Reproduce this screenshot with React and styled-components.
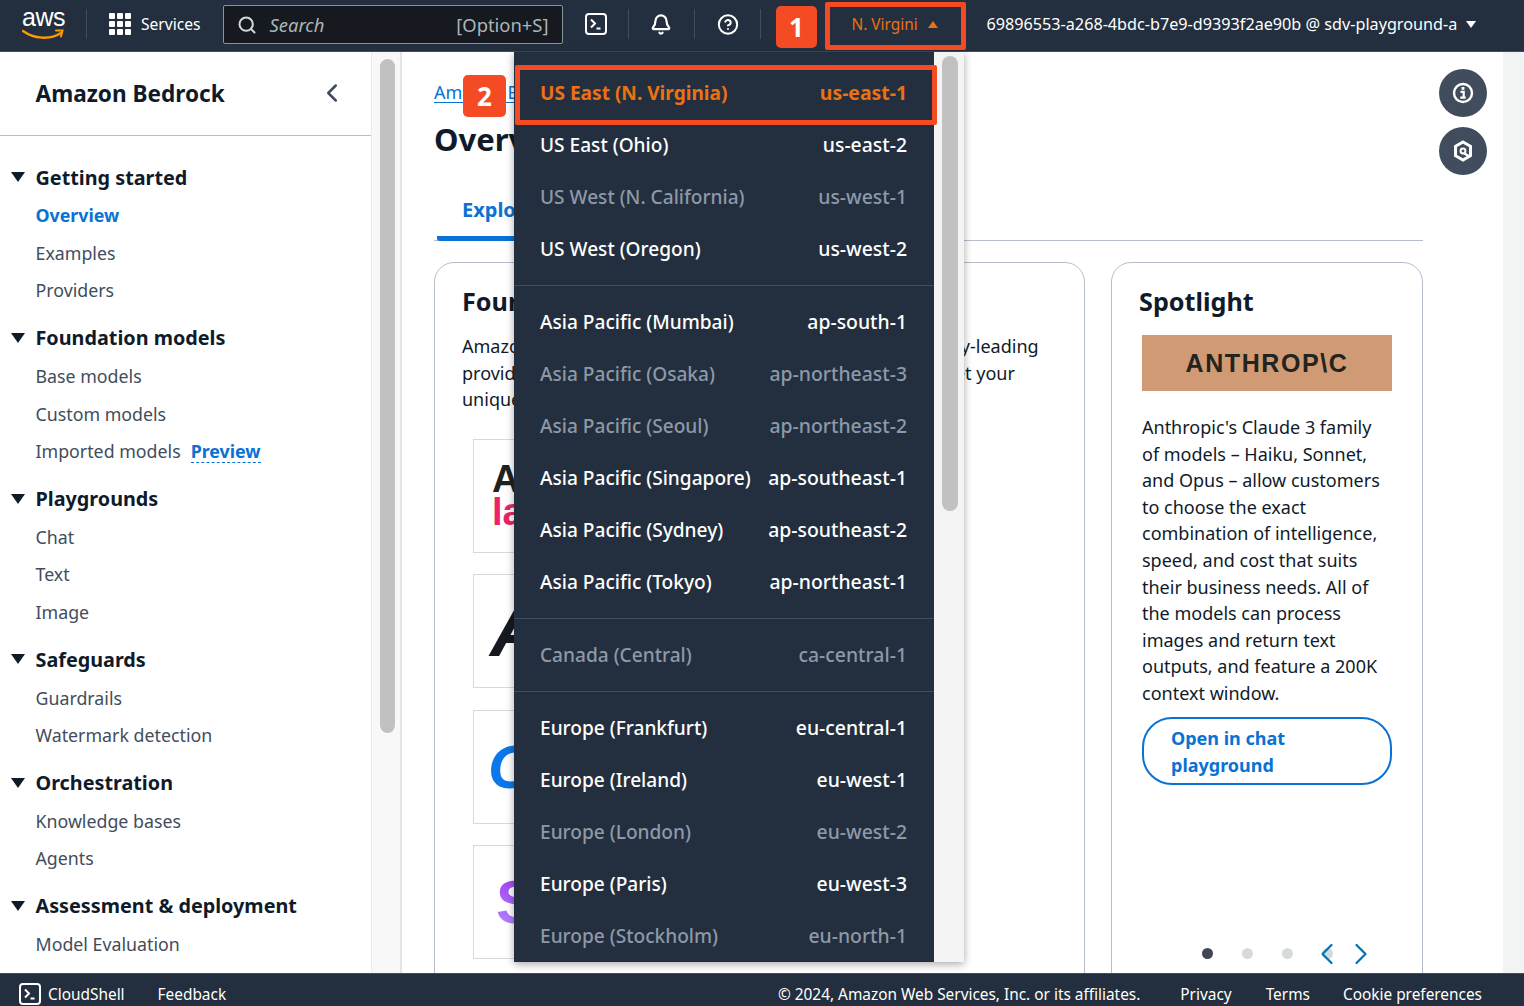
import React from 'react'
import styled, { createGlobalStyle } from 'styled-components'
import { Search, Bell, CircleHelp, ChevronLeft, ChevronRight } from 'lucide-react'

const GlobalStyle = createGlobalStyle`
    html, body {
        margin: 0;
        padding: 0;
        background: #ffffff;
    }
    * {
        box-sizing: border-box;
    }
`

const Page = styled.div`
    position: relative;
    width: 1524px;
    height: 1006px;
    overflow: hidden;
    display: flex;
    flex-direction: column;
    font-family: "Noto Sans", "Open Sans", sans-serif;
    color: #0f1b2a;
`

/* --- top bar --- */
const TopBar = styled.header`
    height: 52px;
    flex: none;
    display: flex;
    align-items: center;
    background: #232f3e;
    border-bottom: 1px solid #414d5c;
    color: #ffffff;
    padding: 0 0 3px 22px;
`

const AwsLogo = styled.div`
    width: 42px;
    height: 38px;
    position: relative;
    flex: none;
    font-family: "Liberation Sans", sans-serif;
    font-size: 25px;
    line-height: 24px;
    letter-spacing: -0.5px;
    svg {
        position: absolute;
        left: 0;
        top: 24px;
    }
`

const Divider = styled.span`
    width: 1px;
    height: 30px;
    flex: none;
    background: #414d5c;
    margin: 0 ${(props) => props.$gap || 22}px;
`

const ServicesGrid = styled.div`
    display: grid;
    grid-template-columns: repeat(3, 6px);
    grid-auto-rows: 6px;
    gap: 2px;
    margin-right: 10px;
    span {
        background: #ffffff;
        border-radius: 1px;
    }
`

const BarText = styled.span`
    font-size: 15.6px;
    white-space: nowrap;
`

const SearchBox = styled.div`
    width: 340px;
    height: 39px;
    margin: 1px 22px 0 22px;
    flex: none;
    display: flex;
    align-items: center;
    padding: 0 13px;
    background: #16191f;
    border: 1px solid #879596;
    border-radius: 2px;
    color: #d5dbdb;
    font-size: 18.4px;
`

const SearchHint = styled.span`
    flex: 1;
    margin-left: 13px;
    font-style: italic;
    color: #aab7b8;
`

const ShortcutHint = styled.span`
    color: #aab7b8;
`

const IconSlot = styled.div`
    width: 22px;
    height: 22px;
    flex: none;
    display: flex;
    align-items: center;
    justify-content: center;
`

const RegionLabel = styled.div`
    margin-left: 70px;
    display: flex;
    align-items: center;
    gap: 10px;
    width: 135px;
    flex: none;
    color: #ec7211;
    font-size: 15.4px;
`

const AccountLabel = styled.div`
    display: flex;
    align-items: center;
    gap: 9px;
    font-size: 16.2px;
    white-space: nowrap;
`

const Caret = styled.span`
    width: 0;
    height: 0;
    flex: none;
    border-left: ${(props) => props.$half || 5.5}px solid transparent;
    border-right: ${(props) => props.$half || 5.5}px solid transparent;
    ${(props) =>
        props.$up
            ? `border-bottom: ${(props.$half || 5.5) * 1.45}px solid ${props.$color};`
            : `border-top: ${(props.$half || 5.5) * 1.45}px solid ${props.$color};`}
`

/* --- body --- */
const Body = styled.div`
    flex: 1;
    min-height: 0;
    display: flex;
`

const Sidebar = styled.aside`
    width: 372px;
    flex: none;
    border-right: 1px solid #e9ebed;
    overflow: hidden;
`

const SideHeader = styled.div`
    height: 84px;
    display: flex;
    align-items: center;
    justify-content: space-between;
    padding: 0 24px 1px 35.5px;
    border-bottom: 1px solid #b6bec9;
    font-size: 22.6px;
    font-weight: 700;
    color: #0f1b2a;
    svg {
        color: #414d5c;
    }
`

const SideNav = styled.nav`
    padding-top: 23px;
`

const NavSection = styled.div`
    margin-bottom: 10.3px;
`

const NavHeading = styled.div`
    height: 38px;
    display: flex;
    align-items: center;
    gap: 10.5px;
    padding: 0 0 2px 11px;
    font-size: 19.8px;
    font-weight: 700;
    white-space: nowrap;
`

const NavItem = styled.div`
    height: 37.5px;
    display: flex;
    align-items: center;
    gap: 10px;
    padding: 0 0 1px 35.5px;
    font-size: 17.8px;
    white-space: nowrap;
    color: ${(props) => (props.$active ? '#0972d3' : '#414d5c')};
    font-weight: ${(props) => (props.$active ? 700 : 400)};
`

const PreviewTag = styled.span`
    color: #0972d3;
    font-weight: 700;
    border-bottom: 1px dashed #0972d3;
    line-height: 22px;
`

const Gutter = styled.div`
    width: 30px;
    flex: none;
    padding: 7px 7px 0 8px;
    background: #f8f8f8;
    border-right: 2px solid #e3e5e6;
`

const GutterThumb = styled.div`
    width: 15px;
    height: ${(props) => props.$height}px;
    background: #c1c1c1;
    border-radius: 8px;
`

const Main = styled.main`
    flex: 1;
    min-width: 0;
    overflow: hidden;
    padding: 28px 0 0 32px;
    display: flex;
`

const Content = styled.div`
    width: 989px;
    flex: none;
`

const Breadcrumb = styled.div`
    height: 26px;
    font-size: 18px;
    line-height: 25px;
    color: #0972d3;
    text-decoration: underline;
    text-underline-offset: 3px;
    white-space: nowrap;
`

const PageTitle = styled.h1`
    margin: 13px 0 0;
    font-size: 31px;
    line-height: 40px;
    font-weight: 700;
`

const TabRow = styled.div`
    margin-top: 20px;
    height: 62px;
    border-bottom: 1px solid #b6bec9;
`

const ActiveTab = styled.div`
    width: 200px;
    height: 62px;
    margin-left: 3px;
    padding: 18px 0 0 25px;
    border-bottom: 5px solid #0972d3;
    border-radius: 0 0 0 3px;
    color: #0972d3;
    font-size: 20px;
    line-height: 26px;
    font-weight: 700;
`

const CardRow = styled.div`
    margin-top: 21px;
    display: flex;
    gap: 26px;
`

const Card = styled.section`
    width: ${(props) => props.$width}px;
    height: 760px;
    flex: none;
    border: 1px solid #b6bec9;
    border-radius: 20px;
    padding: 19px 27px 0;
`

const CardTitle = styled.h2`
    margin: 0;
    font-size: 25.2px;
    line-height: 38px;
    font-weight: 700;
`

const CardIntro = styled.p`
    margin: 13px 0 0;
    font-size: 18px;
    line-height: 26.6px;
`

const LogoList = styled.div`
    margin: 26px 0 0 11px;
    display: flex;
    flex-direction: column;
    gap: 21.4px;
`

const LogoCell = styled.div`
    width: 180px;
    height: 114px;
    border: 1px solid #d5dbdb;
    padding-left: ${(props) => props.$pad}px;
    display: flex;
    flex-direction: column;
    justify-content: center;
    font-family: "Liberation Sans", sans-serif;
    font-weight: 700;
    font-style: ${(props) => (props.$italic ? 'italic' : 'normal')};
    font-size: ${(props) => props.$size}px;
    line-height: ${(props) => props.$lineHeight || 1};
    color: ${(props) => props.$color};
`

const LogoSub = styled.span`
    color: #ec2467;
`

const LogoGradient = styled.span`
    background: linear-gradient(180deg, #a23cf5 0%, #b58cff 100%);
    -webkit-background-clip: text;
    background-clip: text;
    color: transparent;
`

const SpotlightBody = styled.div`
    margin-left: 3px;
    width: 250px;
`

const AnthropicBanner = styled.div`
    margin-top: 15px;
    height: 56px;
    background: #cf9a74;
    display: flex;
    align-items: center;
    justify-content: center;
    font-family: "Liberation Sans", sans-serif;
    font-weight: 700;
    font-size: 25px;
    letter-spacing: 1.6px;
    color: #232320;
`

const SpotlightText = styled.p`
    margin: 23px 0 0;
    font-size: 18px;
    line-height: 26.6px;
`

const ChatButton = styled.div`
    margin-top: 10px;
    height: 68px;
    width: 250px;
    border: 2px solid #0972d3;
    border-radius: 30px;
    padding: 6px 80px 0 27px;
    color: #0972d3;
    font-size: 18px;
    line-height: 27px;
    font-weight: 700;
`

const Pager = styled.div`
    margin: 157px 0 0 60px;
    display: flex;
    align-items: center;
    gap: 29px;
    height: 24px;
`

const Dot = styled.span`
    width: 11px;
    height: 11px;
    flex: none;
    border-radius: 50%;
    background: ${(props) => (props.$on ? '#414750' : '#d5dbdb')};
`

const PagerArrows = styled.div`
    margin-left: -53.5px;
    display: flex;
    color: #0073bb;
    svg + svg {
        margin-left: -2px;
    }
`

const Rail = styled.div`
    width: 80px;
    flex: none;
    margin-top: -11px;
    padding-left: 16px;
    display: flex;
    flex-direction: column;
    gap: 10px;
`

const RailButton = styled.div`
    width: 48px;
    height: 48px;
    border-radius: 50%;
    background: #414d5c;
    color: #ffffff;
    display: flex;
    align-items: center;
    justify-content: center;
`

const Strip = styled.div`
    width: 21px;
    flex: none;
    margin-top: -28px;
    background: #f2f3f3;
`

/* --- footer --- */
const Footer = styled.footer`
    height: 33px;
    flex: none;
    display: flex;
    align-items: center;
    background: #232f3e;
    border-top: 1px solid #414d5c;
    color: #ffffff;
    padding: 8px 42px 0 19px;
    font-size: 15.4px;
`

const FooterLink = styled.span`
    margin-left: ${(props) => props.$gap || 0}px;
    white-space: nowrap;
`

const FooterSpacer = styled.span`
    flex: 1;
`

/* --- region menu --- */
const RegionMenu = styled.div`
    position: absolute;
    left: 514px;
    top: 52px;
    width: 450px;
    height: 910px;
    display: flex;
    box-shadow: 0 2px 8px rgba(0, 0, 0, 0.35);
    overflow: hidden;
`

const RegionList = styled.div`
    width: 420px;
    flex: none;
    background: #232f3e;
    padding-top: 5px;
`

const RegionGroup = styled.div`
    padding: 10px 0;
    border-bottom: ${(props) => (props.$last ? 'none' : '1px solid #414d5c')};
`

const RegionRow = styled.div`
    height: 52px;
    display: flex;
    align-items: center;
    justify-content: space-between;
    padding: 0 27px 0 26px;
    font-size: 19.1px;
    white-space: nowrap;
    font-weight: ${(props) => (props.$selected ? 700 : 500)};
    color: ${(props) =>
        props.$selected ? '#ec7211' : props.$disabled ? '#8d99a8' : '#ffffff'};
`

const RegionCode = styled.span`
    font-size: 19.4px;
    margin-bottom: 2px;
`

const MenuGutter = styled.div`
    flex: 1;
    padding: 4px 6px 0 8px;
    background: #f4f4f4;
`

const MenuThumb = styled.div`
    height: 455px;
    background: #c1c1c1;
    border-radius: 8px;
`

/* --- annotations --- */
const Badge = styled.div`
    position: absolute;
    left: ${(props) => props.$x}px;
    top: ${(props) => props.$y}px;
    width: ${(props) => props.$w}px;
    height: 42px;
    border-radius: 5px;
    background: #f54b24;
    color: #ffffff;
    font-size: 26px;
    font-weight: 700;
    display: flex;
    align-items: center;
    justify-content: center;
`

const Marker = styled.div`
    position: absolute;
    left: ${(props) => props.$x}px;
    top: ${(props) => props.$y}px;
    width: ${(props) => props.$w}px;
    height: ${(props) => props.$h}px;
    border: 5px solid #f54b24;
    border-radius: 2px;
`

const ShellIcon = ({ size = 22 }) => (
    <svg width={size} height={size} viewBox="0 0 22 22" fill="none" stroke="#fff" strokeWidth="2">
        <rect x="1" y="1" width="20" height="20" rx="3" />
        <path d="M6 6.5l4 4-4 4M11.5 15.5h4" />
    </svg>
)

const InfoIcon = () => (
    <svg width="22" height="22" viewBox="0 0 22 22" fill="none" stroke="#fff">
        <circle cx="11" cy="11" r="9" strokeWidth="2.4" />
        <rect x="9.6" y="5" width="2.8" height="2.8" fill="#fff" stroke="none" />
        <path d="M8.5 9.8h3.2v5.2M8.3 15.6h5.4" strokeWidth="2.2" />
    </svg>
)

const HexIcon = () => (
    <svg width="20" height="22" viewBox="0 0 20 22" fill="none" stroke="#fff" strokeWidth="3">
        <path d="M10 2l7.5 4.3v9.4L10 20l-7.5-4.3V6.3z" />
        <circle cx="10" cy="11" r="2.4" strokeWidth="2" />
        <path d="M11 13l5 3.5" strokeWidth="2.4" />
    </svg>
)

const navData = [
    { title: 'Getting started', items: ['Overview', 'Examples', 'Providers'] },
    { title: 'Foundation models', items: ['Base models', 'Custom models', 'Imported models'] },
    { title: 'Playgrounds', items: ['Chat', 'Text', 'Image'] },
    { title: 'Safeguards', items: ['Guardrails', 'Watermark detection'] },
    { title: 'Orchestration', items: ['Knowledge bases', 'Agents'] },
    { title: 'Assessment & deployment', items: ['Model Evaluation'] },
]

const regionGroups = [
    [
        ['US East (N. Virginia)', 'us-east-1', 'selected'],
        ['US East (Ohio)', 'us-east-2'],
        ['US West (N. California)', 'us-west-1', 'disabled'],
        ['US West (Oregon)', 'us-west-2'],
    ],
    [
        ['Asia Pacific (Mumbai)', 'ap-south-1'],
        ['Asia Pacific (Osaka)', 'ap-northeast-3', 'disabled'],
        ['Asia Pacific (Seoul)', 'ap-northeast-2', 'disabled'],
        ['Asia Pacific (Singapore)', 'ap-southeast-1'],
        ['Asia Pacific (Sydney)', 'ap-southeast-2'],
        ['Asia Pacific (Tokyo)', 'ap-northeast-1'],
    ],
    [['Canada (Central)', 'ca-central-1', 'disabled']],
    [
        ['Europe (Frankfurt)', 'eu-central-1'],
        ['Europe (Ireland)', 'eu-west-1'],
        ['Europe (London)', 'eu-west-2', 'disabled'],
        ['Europe (Paris)', 'eu-west-3'],
        ['Europe (Stockholm)', 'eu-north-1', 'disabled'],
    ],
]

export default function App() {
    return (
        <Page>
            <GlobalStyle />
            <TopBar>
                <AwsLogo>
                    aws
                    <svg width="42" height="14" viewBox="0 0 42 14" fill="none">
                        <path d="M1 2c11 8 27 9 38 2" stroke="#ff9900" strokeWidth="2.4" strokeLinecap="round" />
                        <path d="M34 1.5l6.5 0-1.5 6" stroke="#ff9900" strokeWidth="2" strokeLinecap="round" />
                    </svg>
                </AwsLogo>
                <Divider />
                <ServicesGrid>
                    {Array.from({ length: 9 }).map((_, i) => (
                        <span key={i} />
                    ))}
                </ServicesGrid>
                <BarText>Services</BarText>
                <SearchBox>
                    <Search size={20} strokeWidth={2.4} />
                    <SearchHint>Search</SearchHint>
                    <ShortcutHint>[Option+S]</ShortcutHint>
                </SearchBox>
                <IconSlot>
                    <ShellIcon />
                </IconSlot>
                <Divider $gap={21} />
                <IconSlot>
                    <Bell size={23} strokeWidth={2.4} />
                </IconSlot>
                <Divider $gap={22} />
                <IconSlot>
                    <CircleHelp size={23} strokeWidth={2.2} />
                </IconSlot>
                <Divider $gap={21} />
                <RegionLabel>
                    N. Virgini
                    <Caret $up $color="#ec7211" />
                </RegionLabel>
                <AccountLabel>
                    69896553-a268-4bdc-b7e9-d9393f2ae90b @ sdv-playground-a
                    <Caret $color="#ffffff" />
                </AccountLabel>
            </TopBar>

            <Body>
                <Sidebar>
                    <SideHeader>
                        Amazon Bedrock
                        <ChevronLeft size={30} strokeWidth={2} />
                    </SideHeader>
                    <SideNav>
                        {navData.map((section) => (
                            <NavSection key={section.title}>
                                <NavHeading>
                                    <Caret $half={7} $color="#0f1b2a" />
                                    {section.title}
                                </NavHeading>
                                {section.items.map((item) => (
                                    <NavItem key={item} $active={item === 'Overview'}>
                                        {item}
                                        {item === 'Imported models' && <PreviewTag>Preview</PreviewTag>}
                                    </NavItem>
                                ))}
                            </NavSection>
                        ))}
                    </SideNav>
                </Sidebar>
                <Gutter>
                    <GutterThumb $height={674} />
                </Gutter>
                <Main>
                    <Content>
                        <Breadcrumb>Amazon Bedrock</Breadcrumb>
                        <PageTitle>Overview</PageTitle>
                        <TabRow>
                            <ActiveTab>Explore</ActiveTab>
                        </TabRow>
                        <CardRow>
                            <Card $width={651}>
                                <CardTitle>Foundation models</CardTitle>
                                <CardIntro>
                                    Amazon Bedrock supports foundation models from industry-leading
                                    providers. Choose the right model which works best to meet your
                                    unique needs.
                                </CardIntro>
                                <LogoList>
                                    <LogoCell $color="#1f2024" $pad={18} $size={38} $lineHeight={0.85}>
                                        AI21
                                        <LogoSub>labs</LogoSub>
                                    </LogoCell>
                                    <LogoCell $color="#16191f" $italic $pad={16} $size={74}>Amazon</LogoCell>
                                    <LogoCell $color="#0a78ea" $italic $pad={14} $size={62}>Cohere</LogoCell>
                                    <LogoCell $pad={22} $size={62}>
                                        <LogoGradient>Stability</LogoGradient>
                                    </LogoCell>
                                </LogoList>
                            </Card>
                            <Card $width={312}>
                                <CardTitle>Spotlight</CardTitle>
                                <SpotlightBody>
                                    <AnthropicBanner>ANTHROP\C</AnthropicBanner>
                                    <SpotlightText>
                                        Anthropic's Claude 3 family of models – Haiku, Sonnet, and Opus – allow
                                        customers to choose the exact combination of intelligence, speed, and
                                        cost that suits their business needs. All of the models can process
                                        images and return text outputs, and feature a 200K context window.
                                    </SpotlightText>
                                    <ChatButton>Open in chat playground</ChatButton>
                                    <Pager>
                                        <Dot $on />
                                        <Dot />
                                        <Dot />
                                        <Dot />
                                        <PagerArrows>
                                            <ChevronLeft size={36} strokeWidth={1.5} />
                                            <ChevronRight size={36} strokeWidth={1.5} />
                                        </PagerArrows>
                                    </Pager>
                                </SpotlightBody>
                            </Card>
                        </CardRow>
                    </Content>
                    <Rail>
                        <RailButton>
                            <InfoIcon />
                        </RailButton>
                        <RailButton>
                            <HexIcon />
                        </RailButton>
                    </Rail>
                    <Strip />
                </Main>
            </Body>

            <Footer>
                <ShellIcon />
                <FooterLink $gap={7}>CloudShell</FooterLink>
                <FooterLink $gap={33}>Feedback</FooterLink>
                <FooterSpacer />
                <FooterLink>© 2024, Amazon Web Services, Inc. or its affiliates.</FooterLink>
                <FooterLink $gap={40}>Privacy</FooterLink>
                <FooterLink $gap={34}>Terms</FooterLink>
                <FooterLink $gap={33}>Cookie preferences</FooterLink>
            </Footer>

            <RegionMenu>
                <RegionList>
                    {regionGroups.map((group, i) => (
                        <RegionGroup key={i} $last={i === regionGroups.length - 1}>
                            {group.map(([name, code, state]) => (
                                <RegionRow key={code} $selected={state === 'selected'} $disabled={state === 'disabled'}>
                                    <span>{name}</span>
                                    <RegionCode>{code}</RegionCode>
                                </RegionRow>
                            ))}
                        </RegionGroup>
                    ))}
                </RegionList>
                <MenuGutter>
                    <MenuThumb />
                </MenuGutter>
            </RegionMenu>

            <Badge $x={776} $y={6} $w={41}>1</Badge>
            <Marker $x={825} $y={2} $w={141} $h={48} />
            <Badge $x={463} $y={75} $w={43}>2</Badge>
            <Marker $x={515} $y={65} $w={422} $h={60} />
        </Page>
    )
}
